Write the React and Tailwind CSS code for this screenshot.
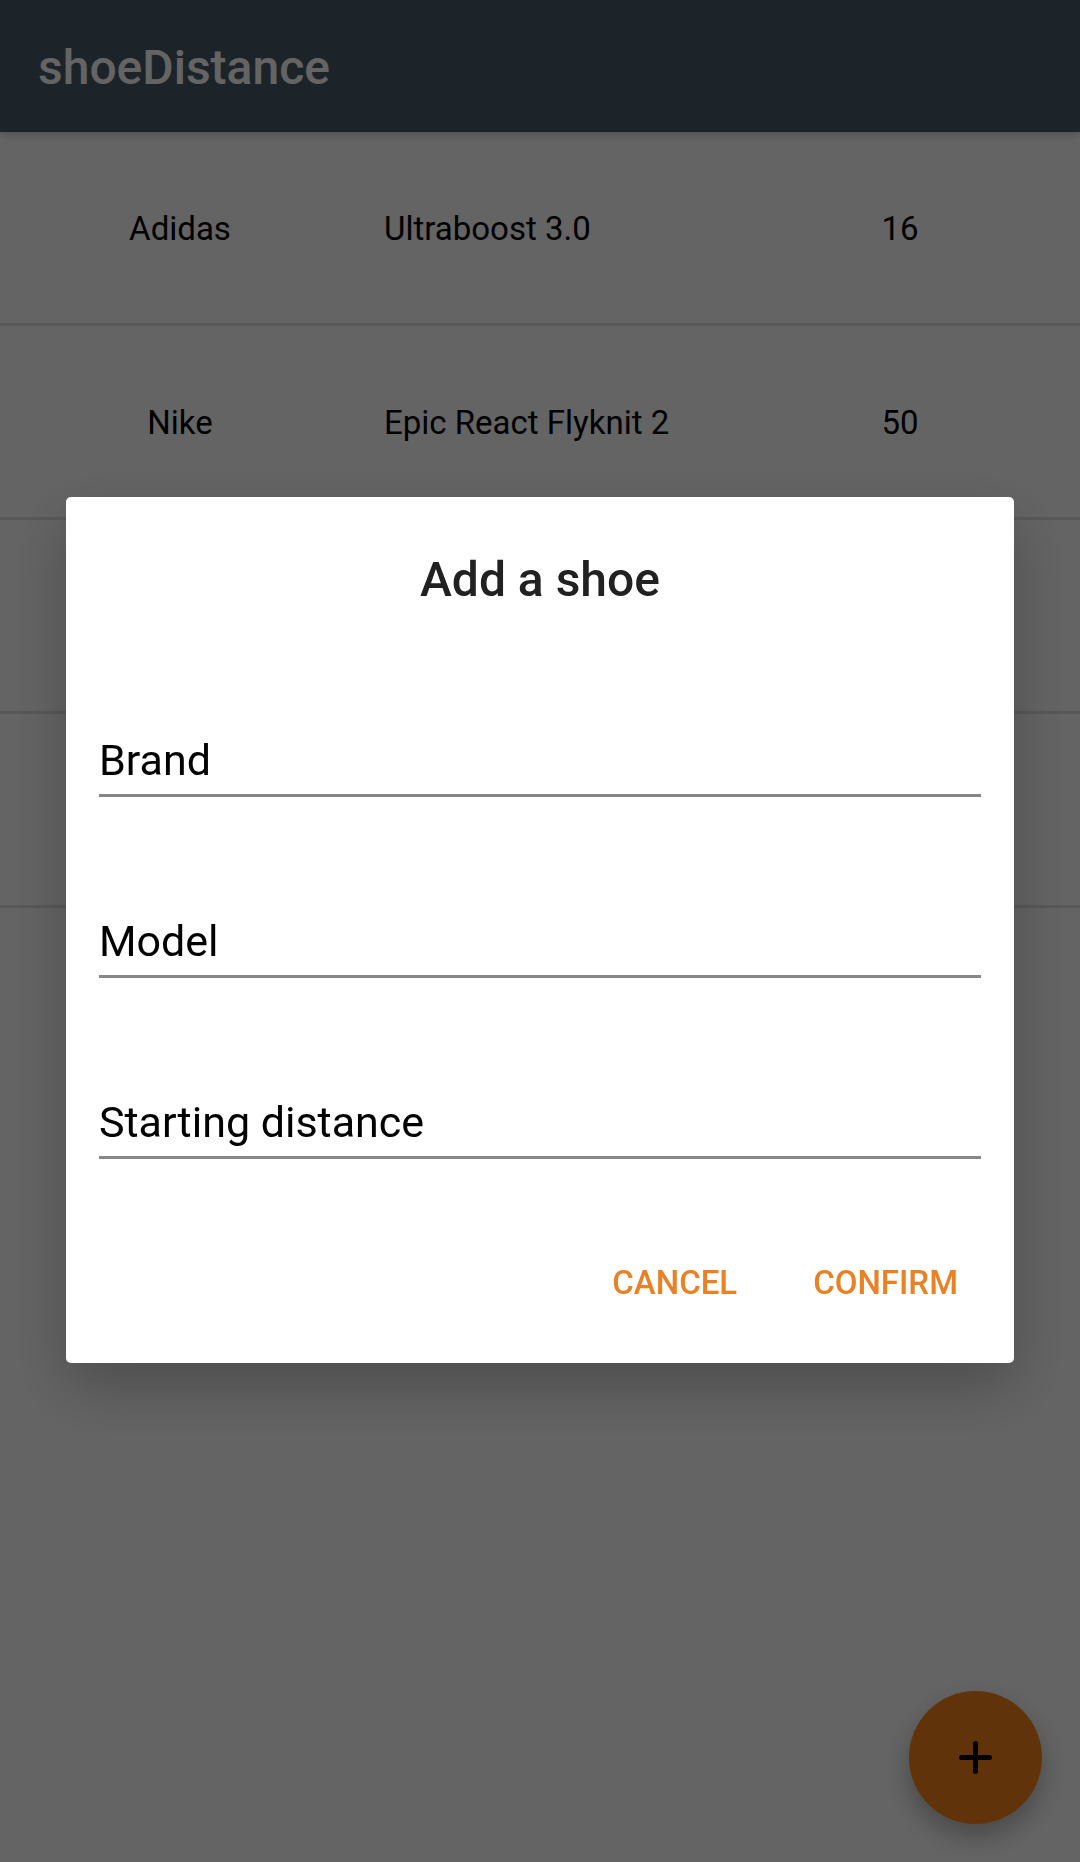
const shoes = [
  { brand: "Adidas", model: "Ultraboost 3.0", distance: "16" },
  { brand: "Nike", model: "Epic React Flyknit 2", distance: "50" },
  { brand: "", model: "", distance: "" },
  { brand: "", model: "", distance: "" },
];

const fields = [
  { id: "brand", label: "Brand" },
  { id: "model", label: "Model" },
  { id: "distance", label: "Starting distance" },
];

function Header() {
  return (
    <header className="relative flex h-[132px] items-center bg-[#485b68] px-[38px] pt-1 shadow-[0_3px_8px_rgba(0,0,0,0.18)]">
      <h1 className="text-[48px] leading-[56px] font-medium text-[#fafafa]">shoeDistance</h1>
    </header>
  );
}

function ShoeTable() {
  return (
    <table className="w-full table-fixed border-separate border-spacing-0 text-[33px] leading-[40px] text-black">
      <tbody>
        {shoes.map((shoe, i) => (
          <tr key={i} className="h-[194px]">
            <td className="border-b-3 border-[#dcdcdc] pt-0.5 text-center">{shoe.brand}</td>
            <td className="border-b-3 border-[#dcdcdc] pt-0.5 pl-6 whitespace-nowrap">{shoe.model}</td>
            <td className="border-b-3 border-[#dcdcdc] pt-0.5 text-center">{shoe.distance}</td>
          </tr>
        ))}
      </tbody>
    </table>
  );
}

function AddButton() {
  return (
    <button
      type="button"
      aria-label="Add a shoe"
      className="fixed right-[38px] bottom-[38px] flex size-[133px] items-center justify-center rounded-full bg-[#f38019] shadow-[0_12px_26px_rgba(0,0,0,0.28)]"
    >
      <svg viewBox="0 0 35 35" className="size-[35px]" fill="none" stroke="black" strokeWidth="5" strokeLinecap="round">
        <path d="M17.5 3.5v28M3.5 17.5h28" />
      </svg>
    </button>
  );
}

function AddShoeDialog() {
  return (
    <div className="fixed inset-0 flex items-center justify-center bg-black/60 px-[66px] pb-0.5">
      <form
        role="dialog"
        aria-labelledby="dialog-title"
        className="w-full rounded-[5px] bg-white px-[33px] pt-[55px] pb-[40px] shadow-[0_24px_60px_rgba(0,0,0,0.24)]"
      >
        <h2 id="dialog-title" className="text-center text-[48px] leading-[56px] font-medium text-[#212121]">
          Add a shoe
        </h2>
        <div className="mt-[111px] flex flex-col gap-[103px]">
          {fields.map((field) => (
            <input
              key={field.id}
              id={field.id}
              type="text"
              aria-label={field.label}
              placeholder={field.label}
              className="h-[78px] w-full border-b-3 border-[#868686] pt-[6px] text-[43px] leading-[52px] text-black outline-none placeholder:text-black placeholder:opacity-100"
            />
          ))}
        </div>
        <div className="mt-[84px] flex justify-end gap-[30px]">
          <button type="button" className="h-[80px] px-[23px] text-[33px] leading-[40px] font-medium text-[#ea8125]">
            CANCEL
          </button>
          <button type="submit" className="h-[80px] px-[23px] text-[33px] leading-[40px] font-medium text-[#ea8125]">
            CONFIRM
          </button>
        </div>
      </form>
    </div>
  );
}

export default function App() {
  return (
    <div className="min-h-screen bg-[#fafafa] font-[Roboto,sans-serif]">
      <Header />
      <ShoeTable />
      <AddButton />
      <AddShoeDialog />
    </div>
  );
}
